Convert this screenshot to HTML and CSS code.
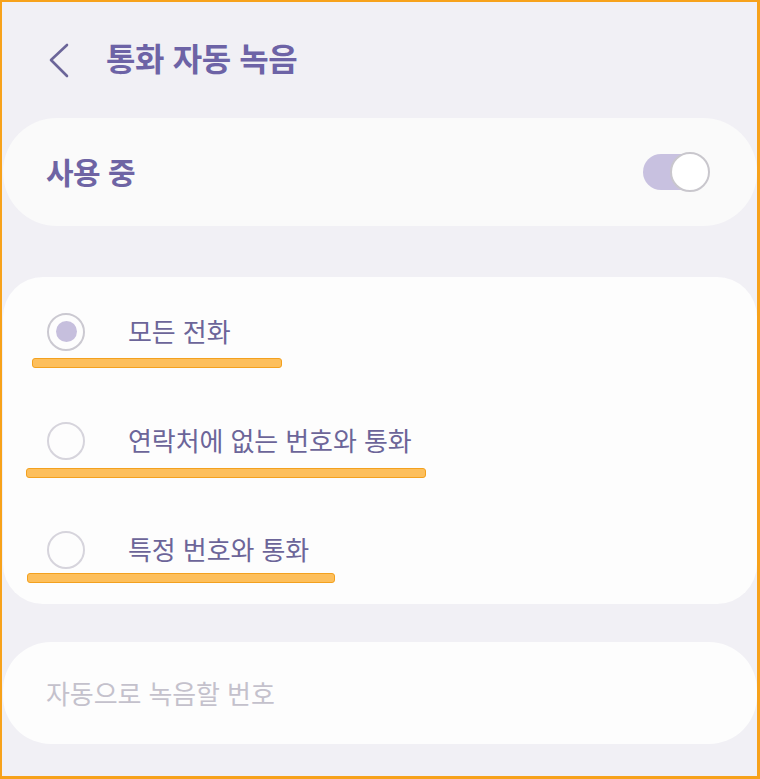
FILE: index.html
```html
<!DOCTYPE html>
<html lang="ko">
<head>
<meta charset="utf-8">
<link rel="stylesheet" href="styles.css">
</head>
<body>
<div class="frame">
  <header class="header">
    <svg class="back" width="24" height="36" viewBox="0 0 24 36"><path d="M19 3 L3 18 L19 34" fill="none" stroke="#6b6599" stroke-width="2.6" stroke-linecap="round" stroke-linejoin="round"/></svg>
    <h1 class="title">통화 자동 녹음</h1>
  </header>

  <section class="card master">
    <span class="master-label">사용 중</span>
    <span class="toggle"><span class="track"></span><span class="thumb"></span></span>
  </section>

  <section class="card options">
    <div class="row">
      <span class="radio checked"><span class="dot"></span></span>
      <span class="label">모든 전화</span>
      <span class="mark mark1"></span>
    </div>
    <div class="row">
      <span class="radio"></span>
      <span class="label">연락처에 없는 번호와 통화</span>
      <span class="mark mark2"></span>
    </div>
    <div class="row">
      <span class="radio"></span>
      <span class="label">특정 번호와 통화</span>
      <span class="mark mark3"></span>
    </div>
  </section>

  <section class="card numbers">
    <span class="placeholder">자동으로 녹음할 번호</span>
  </section>
</div>
</body>
</html>
```

FILE: styles.css
```css
* { box-sizing: border-box; }
html, body { margin: 0; padding: 0; }
body {
  font-family: "Noto Sans CJK KR", "Noto Sans", sans-serif;
  background: #f7a21b;
}
.frame {
  width: 760px;
  height: 779px;
  border-style: solid;
  border-color: #f7a21b;
  border-width: 2px 3px 3px 2px;
  background: #f1f0f5;
  overflow: hidden;
  padding: 0 0 0 1px;
}
.header {
  height: 116px;
  display: flex;
  align-items: center;
  padding-left: 45px;
  padding-bottom: 2px;
}
.back { display: block; margin-right: 34px; margin-top: 2px; }
.title {
  margin: 0;
  font-size: 32px;
  font-weight: 700;
  color: #6d63a6;
  letter-spacing: -0.4px;
  margin-top: -4px;
}
.card {
  background: #fcfcfc;
  width: 754px;
}
.master {
  height: 108px;
  border-radius: 54px;
  display: flex;
  align-items: center;
  justify-content: space-between;
  padding: 0 47px 0 43px;
  background: #fafafa;
}
.master-label {
  font-size: 30px;
  font-weight: 700;
  color: #6e64a4;
  letter-spacing: -0.5px;
  margin-top: -2px;
}
.toggle {
  position: relative;
  width: 67px;
  height: 40px;
}
.track {
  position: absolute;
  left: 0; top: 2px;
  width: 56px; height: 36px;
  border-radius: 18px;
  background: #c8c1e0;
}
.thumb {
  position: absolute;
  right: 0; top: 0;
  width: 40px; height: 40px;
  border-radius: 50%;
  background: #ffffff;
  border: 2px solid #c9c7cd;
}
.options {
  margin-top: 51px;
  height: 327px;
  border-radius: 40px;
  background: #fdfdfd;
}
.row {
  position: relative;
  height: 109px;
  display: flex;
  align-items: center;
  padding-left: 44px;
}
.radio {
  width: 38px; height: 38px;
  border-radius: 50%;
  border: 2px solid #d6d4dc;
  display: flex;
  align-items: center;
  justify-content: center;
  margin-right: 43px;
  flex: none;
}
.radio.checked { border-color: #cbc9d1; }
.dot {
  width: 21px; height: 21px;
  border-radius: 50%;
  background: #c6bfdd;
}
.label {
  font-size: 26px;
  color: #6c6599;
  letter-spacing: -0.1px;
  margin-top: -2px;
}
.mark {
  position: absolute;
  height: 10px;
  background: #fdbf5c;
  border: 1.5px solid #f3a11f;
  border-radius: 3px;
}
.mark1 { left: 29px; width: 250px; top: 81px; }
.mark2 { left: 23px; width: 400px; top: 82px; }
.mark3 { left: 24px; width: 308px; top: 78px; }
.numbers {
  margin-top: 38px;
  height: 102px;
  border-radius: 48px;
  background: #fdfdfd;
  display: flex;
  align-items: center;
  padding-left: 43px;
}
.placeholder {
  font-size: 26px;
  color: #c4c1cc;
  letter-spacing: -0.1px;
  margin-top: -2px;
}
```
